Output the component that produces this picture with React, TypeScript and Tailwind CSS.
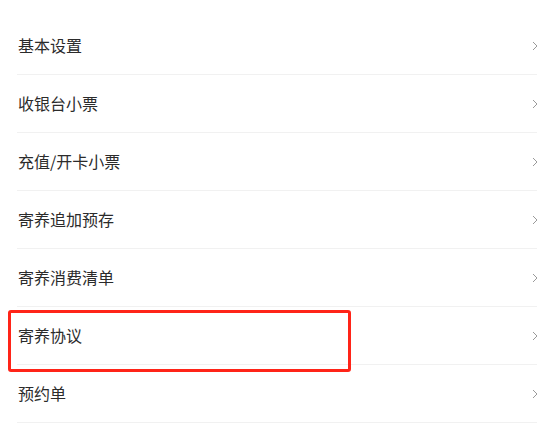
const items = ['基本设置', '收银台小票', '充值/开卡小票', '寄养追加预存', '寄养消费清单', '寄养协议', '预约单'];

function Chevron() {
  return (
    <svg width="6" height="10" viewBox="0 0 6 10" className="shrink-0">
      <path d="M1 1l4 4-4 4" fill="none" stroke="#9a9a9a" strokeWidth="1" />
    </svg>
  );
}

export default function App() {
  return (
    <div
      className="relative w-[537px] h-[432px] overflow-hidden bg-white"
      style={{ fontFamily: '"Noto Sans CJK SC", "Noto Sans", sans-serif' }}
    >
      <ul className="pt-[17px] pl-[17px]">
        {items.map((label) => (
          <li
            key={label}
            className="h-[58px] flex items-center justify-between border-b border-[#f1f1f1] pl-px pr-0"
          >
            <span className="text-[16px] text-[#2b2b2b] -mt-[1px]">{label}</span>
            <span className="-mr-[1px]">
              <Chevron />
            </span>
          </li>
        ))}
      </ul>
      <div className="absolute left-[8px] top-[310px] w-[343px] h-[62px] border-[3px] border-[#ff2418] rounded-[3px]" />
    </div>
  );
}
